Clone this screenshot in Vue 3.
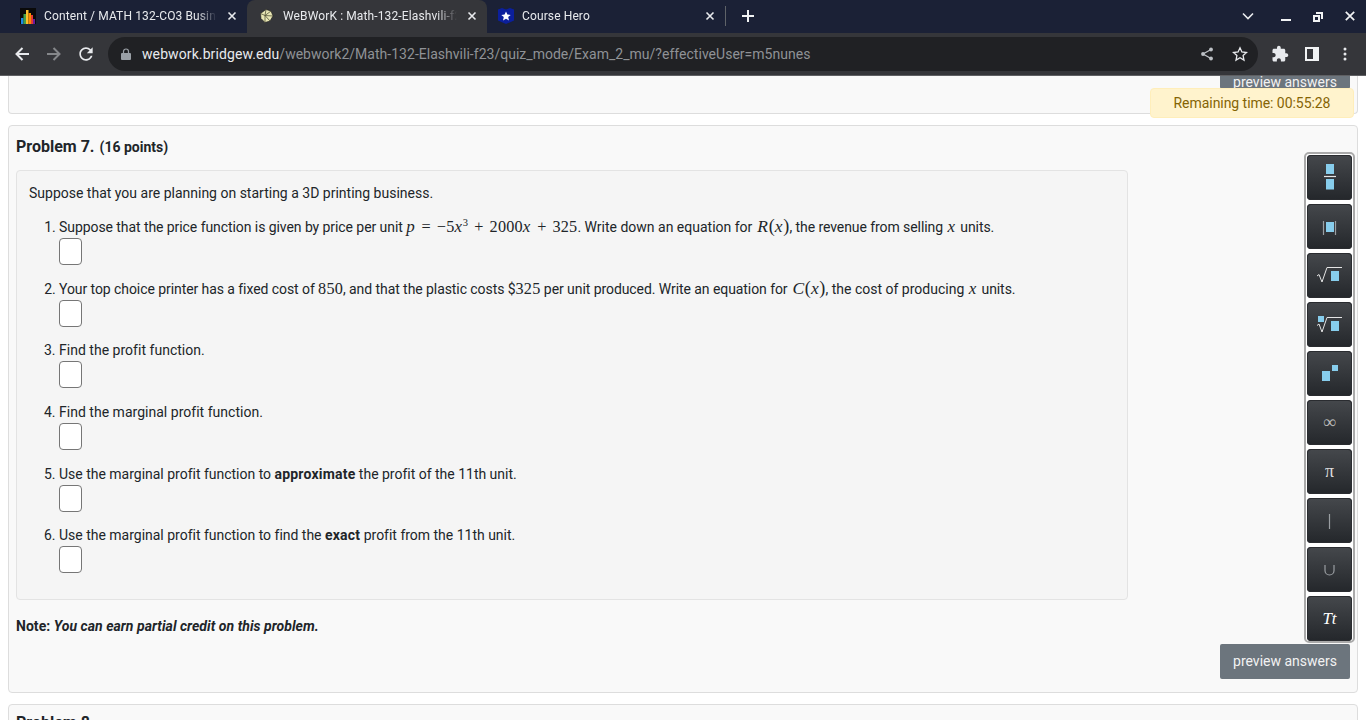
<script setup>
const simple = [
  { id: 3, cls: 'tight', before: 'Find the profit function.' },
  { id: 4, cls: 'tight', before: 'Find the marginal profit function.' },
  { id: 5, cls: 'wide', before: 'Use the marginal profit function to ', bold: 'approximate', after: ' the profit of the 11th unit.' },
  { id: 6, cls: 'wide', before: 'Use the marginal profit function to find the ', bold: 'exact', after: ' profit from the 11th unit.' },
]
</script>

<template>
  <div class="screen">
    <header class="chrome">
      <div class="tabstrip">
        <div class="tab tab-first">
          <svg class="favicon" viewBox="0 0 16 16" width="16" height="16">
            <rect width="16" height="16" fill="#0a0a0a" />
            <rect x="1" y="10" width="2.500" height="6" fill="#1e88e5" />
            <rect x="3.500" y="6" width="2.500" height="10" fill="#43a047" />
            <rect x="6" y="2" width="2.500" height="14" fill="#fbc02d" />
            <rect x="8.500" y="5" width="2.500" height="11" fill="#fb8c00" />
            <rect x="11" y="7" width="2" height="9" fill="#e53935" />
            <rect x="13" y="11" width="2" height="5" fill="#6a1b9a" />
          </svg>
          <span class="tab-title">Content / MATH 132-CO3 Business Calculus</span>
          <svg class="tab-close" viewBox="0 0 10 10" width="10" height="10"><path d="M1.500 1.500l7 7M8.500 1.500l-7 7" stroke="#e8eaed" stroke-width="1.600" /></svg>
        </div>
        <div class="tab tab-active">
          <svg class="favicon" viewBox="0 0 16 16" width="16" height="16">
            <path d="M7 1.500l5 1.500 2 5-3 5-5 1.500-4-4-.5-5z" fill="#e8e6b4" stroke="#1a1a1a" stroke-width=".6" />
            <path d="M7 1.500l-1 6 5 5.500M1.500 5.500L6 7.500l8 .5M12 3L6 7.500l0 6.500" stroke="#55553a" stroke-width=".8" fill="none" />
          </svg>
          <span class="tab-title">WeBWorK : Math-132-Elashvili-f23 : Exam_2_mu</span>
          <svg class="tab-close" viewBox="0 0 10 10" width="10" height="10"><path d="M1.500 1.500l7 7M8.500 1.500l-7 7" stroke="#e8eaed" stroke-width="1.600" /></svg>
        </div>
        <div class="tab tab-last">
          <svg class="favicon" viewBox="0 0 16 16" width="16" height="16">
            <path d="M0 1.500l4-1.500 4 1.500 4-1.500 4 1.500v11l-8 3.500-8-3.500z" fill="#0b1f9c" />
            <path d="M8 3.500l1.400 3 3.300.4-2.500 2.200.8 3.300L8 10.700 5 12.400l.8-3.300-2.500-2.200 3.300-.4z" fill="#fff" />
          </svg>
          <span class="tab-title">Course Hero</span>
          <svg class="tab-close" viewBox="0 0 10 10" width="10" height="10"><path d="M1.500 1.500l7 7M8.500 1.500l-7 7" stroke="#e8eaed" stroke-width="1.600" /></svg>
        </div>
        <span class="tab-sep"></span>
        <svg class="new-tab" viewBox="0 0 12 12" width="12" height="12"><path d="M6 0v12M0 6h12" stroke="#f1f3f4" stroke-width="2" /></svg>
        <div class="window-controls">
          <svg class="wc-chevron" viewBox="0 0 12 8" width="12" height="8"><path d="M1 1.500l5 5 5-5" fill="none" stroke="#e8eaed" stroke-width="1.600" /></svg>
          <svg class="wc-min" viewBox="0 0 10 2" width="10" height="2"><rect width="10" height="2" fill="#f1f3f4" /></svg>
          <svg class="wc-max" viewBox="0 0 10 10" width="10" height="10"><path d="M3 0h7v7H8V2H3zM0 3h7v7H0zM2 5v3h3V5z" fill="#f1f3f4" fill-rule="evenodd" /></svg>
          <svg class="wc-close" viewBox="0 0 10 10" width="10" height="10"><path d="M.8.8l8.400 8.400M9.200.8L.8 9.200" stroke="#f1f3f4" stroke-width="1.700" /></svg>
        </div>
      </div>
      <div class="toolbar">
        <svg class="nav-icon" viewBox="0 0 16 16" width="16" height="16"><path d="M15 8H2.500M8.500 2L2.500 8l6 6" fill="none" stroke="#e8eaed" stroke-width="2" /></svg>
        <svg class="nav-icon" viewBox="0 0 16 16" width="16" height="16"><path d="M1 8h12.500M7.500 2l6 6-6 6" fill="none" stroke="#85878a" stroke-width="2" /></svg>
        <svg class="nav-icon reload" viewBox="0 0 24 24" width="20" height="20"><path d="M17.650 6.350C16.200 4.900 14.210 4 12 4c-4.420 0-7.990 3.580-7.990 8s3.570 8 7.990 8c3.730 0 6.840-2.550 7.730-6h-2.080c-.82 2.330-3.040 4-5.650 4-3.310 0-6-2.690-6-6s2.690-6 6-6c1.660 0 3.140.69 4.220 1.780L13 11h7V4l-2.350 2.350z" fill="#e8eaed" /></svg>
        <div class="omnibox">
          <svg class="lock" viewBox="0 0 10 12" width="10" height="12"><path d="M1 5h8a1 1 0 0 1 1 1v5a1 1 0 0 1-1 1H1a1 1 0 0 1-1-1V6a1 1 0 0 1 1-1z" fill="#9aa0a6" /><path d="M2.500 5V3.500a2.500 2.500 0 0 1 5 0V5" fill="none" stroke="#9aa0a6" stroke-width="1.200" /></svg>
          <span class="url"><span class="url-host">webwork.bridgew.edu</span>/webwork2/Math-132-Elashvili-f23/quiz_mode/Exam_2_mu/?effectiveUser=m5nunes</span>
          <svg class="omni-share" viewBox="0 0 14 14" width="14" height="14"><path d="M11 2.500L3 7l8 4.500" fill="none" stroke="#bdc1c6" stroke-width="1.300" /><circle cx="11" cy="2.500" r="1.900" fill="#bdc1c6" /><circle cx="3" cy="7" r="1.900" fill="#bdc1c6" /><circle cx="11" cy="11.500" r="1.900" fill="#bdc1c6" /></svg>
          <svg class="omni-star" viewBox="0 0 16 16" width="16" height="16"><path d="M8 1.800l1.900 4.200 4.600.5-3.400 3.100.9 4.500L8 11.800l-4 2.300.9-4.500L1.500 6.500l4.600-.5z" fill="none" stroke="#e8eaed" stroke-width="1.300" /></svg>
        </div>
        <svg class="puzzle" viewBox="0 0 24 24" width="18" height="18"><path d="M20.500 11H19V7c0-1.100-.9-2-2-2h-4V3.500C13 2.120 11.880 1 10.500 1S8 2.120 8 3.500V5H4c-1.100 0-1.990.9-1.990 2v3.800H3.500c1.490 0 2.700 1.210 2.700 2.700s-1.210 2.700-2.700 2.700H2V20c0 1.100.9 2 2 2h3.800v-1.500c0-1.490 1.210-2.700 2.700-2.700 1.490 0 2.700 1.210 2.700 2.700V22H17c1.100 0 2-.9 2-2v-4h1.500c1.380 0 2.500-1.120 2.500-2.500S21.880 11 20.500 11z" fill="#e8eaed" /></svg>
        <svg class="side" viewBox="0 0 14 14" width="14" height="14"><path d="M0 0h14v14H0zM2 2v10h6V2z" fill="#f1f3f4" fill-rule="evenodd" /></svg>
        <svg class="kebab" viewBox="0 0 4 14" width="4" height="14"><circle cx="2" cy="2" r="1.500" fill="#e8eaed" /><circle cx="2" cy="7" r="1.500" fill="#e8eaed" /><circle cx="2" cy="12" r="1.500" fill="#e8eaed" /></svg>
      </div>
    </header>

    <main class="page">
      <section class="card card-prev">
        <button class="preview preview-cut">preview answers</button>
      </section>

      <section class="card card-main">
        <h3 class="title">Problem 7. <small>(16 points)</small></h3>
        <div class="well">
          <p class="intro">Suppose that you are planning on starting a 3D printing business.</p>
          <ol class="questions">
            <li class="narrow">
              Suppose that the price function is given by price per unit <span class="math"><i>p</i><span class="rel">=</span>−5<i>x</i><sup>3</sup><span class="bin">+</span>2000<i>x</i><span class="bin">+</span>325</span><span class="seg">. Write down an equation for </span><span class="math fn"><i>R</i>(<i>x</i>)</span>, the revenue from selling <span class="math solo"><i>x</i></span> units.
              <span class="answer"></span>
            </li>
            <li class="narrow">
              Your top choice printer has a fixed cost of <span class="math">850</span>, and that the plastic costs $<span class="math">325</span> per unit produced. Write an equation for <span class="math fn"><i>C</i>(<i>x</i>)</span><span class="seg">, the cost of producing </span><span class="math solo"><i>x</i></span> units.
              <span class="answer"></span>
            </li>
            <li v-for="q in simple" :key="q.id" :class="q.cls">
              {{ q.before }}<b v-if="q.bold">{{ q.bold }}</b>{{ q.after }}
              <span class="answer"></span>
            </li>
          </ol>
        </div>
        <p class="note"><b>Note: <i>You can earn partial credit on this problem.</i></b></p>
        <div class="actions"><button class="preview">preview answers</button></div>
      </section>

      <section class="card card-next">
        <h3 class="title">Problem 8.</h3>
      </section>

      <div class="timer">Remaining time: 00:55:28</div>

      <aside class="palette">
        <button class="tool">
          <svg viewBox="0 0 45 45" width="45" height="45"><rect x="19" y="9" width="8" height="10" class="sq" /><path d="M17 21.500h12" class="ln" /><rect x="19" y="24" width="8" height="10.500" class="sq" /></svg>
        </button>
        <button class="tool">
          <svg viewBox="0 0 45 45" width="45" height="45"><rect x="19" y="18" width="8" height="10" class="sq" /><path d="M16.500 17v14M28.500 17v14" class="ln dim" /></svg>
        </button>
        <button class="tool">
          <svg viewBox="0 0 45 45" width="45" height="45"><path d="M10 23l2-1.500L15 29l5-14.500H35" class="ln thin" /><rect x="24" y="18" width="8" height="10" class="sq" /></svg>
        </button>
        <button class="tool">
          <svg viewBox="0 0 45 45" width="45" height="45"><rect x="11" y="14" width="6" height="6" class="sq" /><path d="M10 23.500l2-1.500L15 30l5-14.500H35" class="ln thin" /><rect x="24" y="19" width="8" height="10" class="sq" /></svg>
        </button>
        <button class="tool">
          <svg viewBox="0 0 45 45" width="45" height="45"><rect x="15" y="20" width="8" height="10" class="sq" /><rect x="25" y="14" width="6" height="6" class="sq" /></svg>
        </button>
        <button class="tool glyph glyph-inf">∞</button>
        <button class="tool glyph glyph-pi">π</button>
        <button class="tool">
          <svg viewBox="0 0 45 45" width="45" height="45"><path d="M22.500 16v15" class="ln dim" /></svg>
        </button>
        <button class="tool">
          <svg viewBox="0 0 45 45" width="45" height="45"><path d="M18 18v5.500a4.500 4.500 0 0 0 9 0V18" class="ln dim" /></svg>
        </button>
        <button class="tool glyph glyph-tt"><i>Tt</i></button>
      </aside>
    </main>
  </div>
</template>

<style>
html, body { margin: 0; background: #fff; overflow: hidden; }
</style>

<style scoped>
.screen {
  width: 1366px;
  height: 720px;
  display: flex;
  flex-direction: column;
  overflow: hidden;
  font-family: Roboto, "Liberation Sans", sans-serif;
}
svg { display: block; flex: none; }

.chrome { height: 76px; flex: none; background: #35363a; border-bottom: 1px solid #5f6063; box-sizing: border-box; }
.tabstrip { height: 33px; background: #1b2136; display: flex; align-items: flex-start; position: relative; }
.tabstrip > .tab-sep { margin-top: 6px; }
.tabstrip > .new-tab { margin-top: 10px; }
.tab { height: 32px; box-sizing: border-box; display: flex; align-items: center; color: #e8eaed; font-size: 12px; letter-spacing: .12px; }
.tab-first { width: 247px; padding: 0 10px 0 20px; }
.tab-active { width: 240px; height: 33px; padding: 0 11px 1px 12px; background: #35363a; border-radius: 8px 8px 0 0; }
.tab-last { width: 238px; padding: 0 10px 0 11px; }
.favicon { margin-right: 8px; }
.tab-title {
  flex: 1;
  min-width: 0;
  white-space: nowrap;
  overflow: hidden;
  -webkit-mask-image: linear-gradient(to right, #000 calc(100% - 22px), transparent calc(100% - 2px));
  mask-image: linear-gradient(to right, #000 calc(100% - 22px), transparent calc(100% - 2px));
}
.tab-close { margin-left: 8px; }
.tab-active .tab-close { margin-right: -1px; }
.tab-sep { width: 1px; height: 20px; background: #5f6368; flex: none; }
.new-tab { margin-left: 16px; }
.window-controls { margin-left: auto; display: flex; align-items: center; padding-right: 11px; height: 32px; }
.wc-chevron { margin-right: 27px; }
.wc-min { margin-right: 22px; margin-top: 8px; }
.wc-max { margin-right: 22px; margin-top: 1px; }

.toolbar { height: 42px; display: flex; align-items: center; padding: 0 12px 0 14px; }
.nav-icon { margin-right: 16px; }
.nav-icon.reload { margin: 0 12px 0 -2px; }
.omnibox { width: 1150px; height: 34px; border-radius: 17px; background: #202124; display: flex; align-items: center; padding: 0 10px 0 13px; box-sizing: border-box; flex: none; margin-right: 13px; }
.lock { margin-right: 11px; }
.url { flex: 1; font-size: 14px; color: #8f9296; white-space: nowrap; letter-spacing: .02px; }
.url-host { color: #e8eaed; letter-spacing: .1px; }
.omni-share { margin-right: 18px; }
.puzzle { margin-right: 16px; }
.side { margin-right: 24px; }

.page { position: relative; flex: 1; min-height: 0; overflow: hidden; padding: 0 8px; color: #212529; font-size: 14px; line-height: 20px; }
.card { box-sizing: border-box; background: #f9f9f9; border: 1px solid #ddd; border-radius: 4px; padding: 0 7px; width: 1350px; }
.card-prev { height: 38px; border-top: 0; border-radius: 0 0 4px 4px; margin-bottom: 11px; display: flex; justify-content: flex-end; align-items: flex-start; }
.card-main { height: 568px; margin-bottom: 11px; }
.card-next { height: 60px; }
.title { margin: 11px 0 0; font-size: 16px; font-weight: 700; line-height: 20px; color: #212529; }
.title small { font-size: 14px; margin-left: 1px; }
.card-next .title { margin-top: 8px; }

.well { box-sizing: border-box; width: 1112px; height: 430px; margin-top: 13px; padding: 12px; background: #f5f5f5; border: 1px solid #e3e3e3; border-radius: 4px; }
.intro { margin: 0 0 14.3px; }
.questions { margin: 0; padding: 0 0 0 30px; }
.questions li { height: 61.6px; white-space: nowrap; }
.narrow { letter-spacing: -.07px; }
.seg { letter-spacing: 0; }
.tight { letter-spacing: .02px; }
.wide { letter-spacing: -.01px; }
.wide b { letter-spacing: .2px; }
.answer { display: block; width: 23px; height: 27px; box-sizing: border-box; margin-top: 1px; background: #fff; border: 1px solid #767676; border-radius: 4px; }
.math { font-family: "Liberation Serif", "DejaVu Serif", serif; font-size: 16.2px; letter-spacing: .2px; line-height: 0; }
.math i { font-size: 17px; letter-spacing: .8px; }
.math sup { font-size: 10.5px; line-height: 0; vertical-align: 6px; }
.math.fn { font-size: 18px; margin-left: 1.5px; }
.math.fn i { font-size: 17.5px; letter-spacing: .6px; }
.math.solo { margin: 0 1px; }
.rel { margin: 0 6px; }
.bin { margin: 0 6px; }
.note { margin: 16px 0 0; line-height: 20px; letter-spacing: .04px; }
.actions { display: flex; justify-content: flex-end; margin-top: 8px; }
.preview { width: 130px; height: 35px; border: 0; background: #6c757d; color: #f2f2f2; font: 14px/20px Roboto, sans-serif; padding: 0 0 1px; border-radius: 2px; flex: none; }
.preview-cut { height: 13px; line-height: 13px; padding: 0; border-radius: 0 0 2px 2px; }

.timer { position: absolute; left: 1150px; top: 12px; width: 204px; height: 30px; box-sizing: border-box; background: #fff3cd; border: 1px solid #ffeeba; border-radius: 4px; color: #856404; text-align: center; line-height: 28px; font-size: 14px; letter-spacing: -.05px; }

.palette { position: absolute; left: 1304px; top: 76px; width: 51px; height: 491px; box-sizing: border-box; padding: 1px; border: 2px solid #aaa; border-radius: 5px; background: #fff; display: flex; flex-direction: column; gap: 4px; align-items: center; }
.tool { width: 45px; height: 45px; flex: none; padding: 0; border: 0; border-radius: 4px; background: linear-gradient(#45484c, #24272b); color: #ccc; display: flex; align-items: center; justify-content: center; font-family: "Liberation Serif", "DejaVu Serif", serif; font-size: 15px; box-shadow: inset 0 0 0 1px #2a2c30; }
.glyph-inf { font-size: 18px; color: #b8b8b8; }
.glyph-pi { font-size: 18px; color: #ddd; }
.glyph-tt { color: #fff; font-size: 17px; }
.sq { fill: #87cdec; }
.ln { stroke: #e5e5e5; stroke-width: 1.2; fill: none; }
.ln.dim { stroke: #9a9ea2; }
.ln.thin { stroke-width: 1; }
</style>
